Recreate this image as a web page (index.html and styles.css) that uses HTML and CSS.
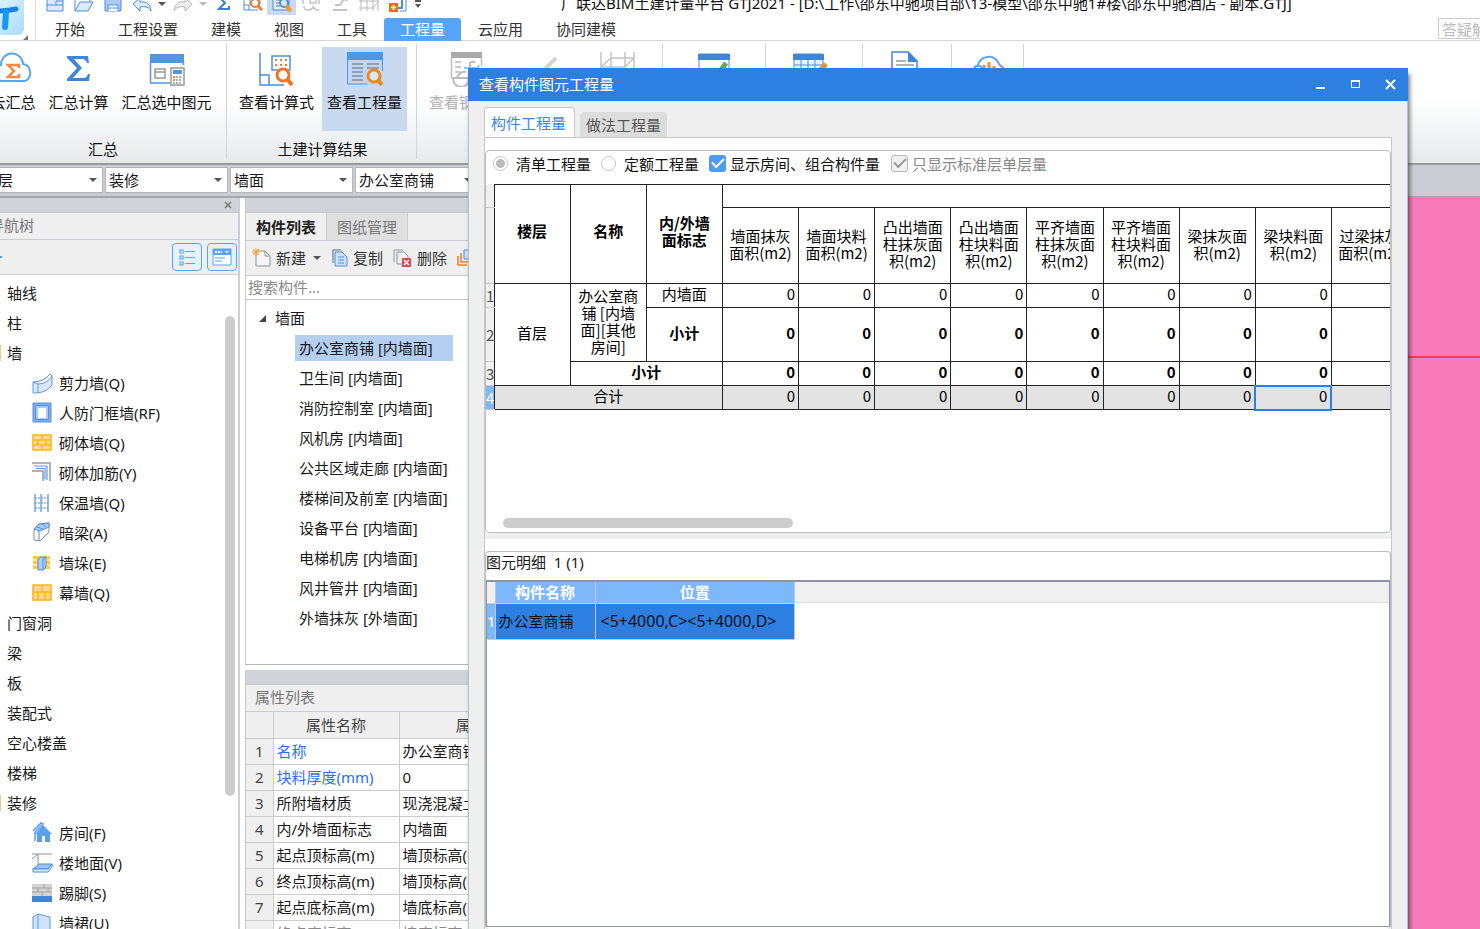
FILE: index.html
```html
<!DOCTYPE html>
<html lang="zh-CN">
<head>
<meta charset="utf-8">
<title>广联达BIM土建计量平台 GTJ2021</title>
<link rel="stylesheet" href="styles.css">
</head>
<body>
<div class="app">
  <header class="top">
    <div class="logo">
      <svg width="35" height="41" viewBox="0 0 35 41">
        <defs><linearGradient id="lg" x1="0" y1="0" x2="1" y2="1"><stop offset="0" stop-color="#eef9ff"/><stop offset="1" stop-color="#a8ddfb"/></linearGradient></defs>
        <rect x="-14" y="-10" width="38" height="45" rx="6" fill="url(#lg)"/>
        <path d="M-4 11Q8 11 16 9" stroke="#1a7fe8" stroke-width="5" stroke-linecap="round" fill="none"/>
        <path d="M6 12L5 27" stroke="#139af5" stroke-width="6" stroke-linecap="round" fill="none"/>
        <path d="M28 35v5h-5z" fill="#777"/>
      </svg>
    </div>
    <div class="top-main">
      <div class="titlebar">
        <button class="q"><svg width="18" height="16" viewBox="0 0 18 16"><path d="M1 1h16v14H1z" fill="#dcebfc" stroke="#4a8fdc"/><path d="M1 9h16M10 9v-4h7" fill="none" stroke="#4a8fdc"/></svg></button>
        <button class="q"><svg width="20" height="16" viewBox="0 0 20 16"><path d="M1 15V1h6l2 2h7v3" fill="none" stroke="#4a8fdc"/><path d="M1 15L6 6h13l-5 9z" fill="#dcebfc" stroke="#4a8fdc"/></svg></button>
        <button class="q"><svg width="18" height="16" viewBox="0 0 18 16"><path d="M1 1h16v14H1z" fill="#a9cbf5" stroke="#4a8fdc"/><path d="M4 15V9h10v6M4 12h10" fill="#fff" stroke="#4a8fdc"/></svg></button>
        <button class="q"><svg width="22" height="16" viewBox="0 0 22 16"><path d="M2 8L9 2v4c7-1 10 2 11 9-2-4-6-5-11-4v4z" fill="#dcebfc" stroke="#4a8fdc"/></svg></button>
        <button class="q q-caret"><i class="caret"></i></button>
        <button class="q"><svg width="22" height="16" viewBox="0 0 22 16"><path d="M20 8l-7-6v4C6 5 3 8 2 15c2-4 6-5 11-4v4z" fill="#eee" stroke="#b5b5b5"/></svg></button>
        <button class="q q-caret"><i class="caret pale"></i></button>
        <button class="q"><svg width="14" height="16" viewBox="0 0 14 16"><path d="M12 4V1H2l6 6-6 6h10v-3" fill="none" stroke="#3f7fcf" stroke-width="2"/></svg></button>
        <button class="q"><svg width="20" height="16" viewBox="0 0 20 16"><path d="M1 0v14h14M1 9h5v5M7 1h10v8H7z" fill="none" stroke="#4a8fdc"/><circle cx="12" cy="7" r="4" fill="#fff" stroke="#ee7d33" stroke-width="2"/><path d="M15 10l4 4" stroke="#ee7d33" stroke-width="3"/></svg></button>
        <button class="q on"><svg width="20" height="16" viewBox="0 0 20 16"><path d="M1 0v14h16V0z" fill="#dce9fa" stroke="#4a8fdc"/><path d="M4 4h4M4 7h4M4 10h4" stroke="#777"/><circle cx="12" cy="7" r="4" fill="#dce9fa" stroke="#4a8fdc" stroke-width="2"/><path d="M14 10l5 5" stroke="#f09a28" stroke-width="4"/></svg></button>
        <button class="q"><svg width="18" height="16" viewBox="0 0 18 16"><path d="M1 8V1h16v7M2 10q0 4 4 4t5-3q2 3 6 3M8 3h6v4H8z" fill="none" stroke="#c4c4c4" stroke-width="1.500"/></svg></button>
        <button class="q"><svg width="16" height="16" viewBox="0 0 16 16"><path d="M1 14h14M3 9h5l4-6 3 2" fill="none" stroke="#c4c4c4" stroke-width="2"/></svg></button>
        <button class="q"><svg width="22" height="16" viewBox="0 0 22 16"><path d="M1 5h20M1 12h15M3 0v15M9 3v12M15 3v12M20 0v15M3 5l6-5M15 12l5-6" fill="none" stroke="#bbb"/></svg></button>
        <button class="q"><svg width="20" height="16" viewBox="0 0 20 16"><path d="M12 15h6V1" fill="none" stroke="#4a8fdc"/><path d="M10 12h4V1" fill="none" stroke="#4a8fdc" stroke-width="2"/><path d="M1 7h9v9H1z" fill="#ee6c1f"/><path d="M5.500 9v5M3 11.500h5" stroke="#fff" stroke-width="1.500"/></svg></button>
        <button class="q q-caret"><svg width="8" height="10" viewBox="0 0 8 10"><path d="M1 2h6" stroke="#555" stroke-width="2"/><path d="M1 5h6l-3 4z" fill="#555"/></svg></button>
        <h1 class="title">广联达BIM土建计量平台 GTJ2021 - [D:\工作\邵东中驰项目部\13-模型\邵东中驰1#楼\邵东中驰酒店 - 副本.GTJ]</h1>
      </div>
      <nav class="menu">
        <button>开始</button><button>工程设置</button><button>建模</button><button>视图</button><button>工具</button><button class="active">工程量</button><button>云应用</button><button>协同建模</button>
        <input class="ask" type="text" aria-label="答疑解惑" placeholder="答疑解惑">
      </nav>
    </div>
  </header>

  <section class="ribbon">
    <div class="group g-sum">
      <div class="tools">
        <button><svg width="40" height="36" viewBox="0 0 40 36"><path d="M9 30a8 8 0 0 1-1-16 11 11 0 0 1 22-1 9 9 0 0 1 2 17z" fill="#fff" stroke="#5ba3f3" stroke-width="2"/><path d="M26 17v-3H15l6 6-6 6h11v-3" fill="none" stroke="#f08a45" stroke-width="2.500"/></svg>云汇总</button>
        <button><svg width="36" height="36" viewBox="0 0 36 36"><path d="M7 5h21l1 7h-2q-1-4-5-4h-8l8 9-9 10h10q4 0 5-4h2l-1 7H7v-2l10-11L7 7z" fill="#3f86d8"/></svg>汇总计算</button>
        <button><svg width="36" height="36" viewBox="0 0 36 36"><path d="M1 3h34v9H1z" fill="#4f96e3"/><path d="M1.500 11v21h20M34.500 11v3" fill="none" stroke="#4f96e3" stroke-width="1.500"/><path d="M6 18h10v9H6zM6 21h10" fill="none" stroke="#999" stroke-width="1.500"/><path d="M22 17h13v17H22z" fill="#fff" stroke="#999" stroke-width="1.500"/><path d="M24 19h9v4h-9z" fill="#4f96e3"/><path d="M24 26h9M24 29h9M24 32h9" stroke="#999" stroke-width="1.500" stroke-dasharray="2 1"/><path d="M24 26h2M24 29h2" stroke="#ee7d33" stroke-width="2"/></svg>汇总选中图元</button>
      </div>
      <div class="caption">汇总</div>
    </div>
    <div class="group g-civil">
      <div class="tools">
        <button><svg width="36" height="36" viewBox="0 0 36 36"><path d="M2 2v32h24M2 24h9v10M14 5h18v14H14z" fill="none" stroke="#4a8fdc" stroke-width="1.500"/><path d="M17 9h13M17 14h13" stroke="#ee7d33" stroke-width="2" stroke-dasharray="2 3"/><circle cx="25" cy="24" r="6" fill="#fff" stroke="#ee7322" stroke-width="3"/><path d="M29 28l5 6" stroke="#ee7322" stroke-width="4"/></svg>查看计算式</button>
        <button class="on"><svg width="38" height="36" viewBox="0 0 38 36"><path d="M1 1h36v33H1z" fill="#bfd7f4"/><path d="M1 1h36v8H1z" fill="#4f96e3"/><path d="M1.500 8v25h20M36.500 8v12" fill="none" stroke="#4f96e3"/><path d="M6 13h11M6 17h11M6 21h11M6 25h11M6 29h11M21 13h12M21 17h12" stroke="#858f9c" stroke-width="1.500"/><circle cx="28" cy="25" r="6" fill="#dce7f5" stroke="#ee8a1c" stroke-width="3"/><path d="M32 29l4 5" stroke="#ee8a1c" stroke-width="4"/></svg>查看工程量</button>
      </div>
      <div class="caption">土建计算结果</div>
    </div>
    <div class="group g-rebar">
      <div class="tools">
        <button class="off"><svg width="34" height="36" viewBox="0 0 34 36"><path d="M1 1h31v6H1z" fill="#aaa"/><path d="M1.500 7v20M31.500 7v8M5 11h6M5 16h6M5 21h5" fill="none" stroke="#bbb" stroke-width="1.500"/><path d="M14 17h12q4 0 2-3M20 19v-7q3-3 5 0M3 27q1 9 8 9t8-9zM7 26q4-6 9-5" fill="none" stroke="#bbb" stroke-width="2"/></svg>查看钢筋量</button>
        <button class="off edit" aria-label="编辑"><svg width="34" height="36" viewBox="0 0 34 36"><path d="M8 20L20 8" stroke="#d4d4d4" stroke-width="4" stroke-linecap="round"/></svg></button>
        <button class="off" aria-label="三维"><svg width="36" height="36" viewBox="0 0 36 36"><path d="M1 1v30M34 1v30M11 1v30M25 1v30M1 16h24l9-9H11zM1 16l10-9" fill="none" stroke="#c4c4c4" stroke-width="1.500"/></svg></button>
      </div>
    </div>
    <div class="group g-check"><div class="tools"><button aria-label="检查"><svg width="32" height="36" viewBox="0 0 32 36"><path d="M1 3h30v24H1z" fill="#fff" stroke="#4a8fdc"/><path d="M0 3h32v6H0z" fill="#3f86d8"/><path d="M14 24l4 2 10-14" fill="none" stroke="#6aa84f" stroke-width="5"/></svg></button></div></div>
    <div class="group g-table"><div class="tools"><button aria-label="表格"><svg width="36" height="36" viewBox="0 0 36 36"><path d="M2 3h29v24H2z" fill="#e8f2fd" stroke="#4a8fdc"/><path d="M1 3h31v6H1z" fill="#3f86d8"/><path d="M2 14h29M2 20h29M9 9v18M16 9v18M23 9v18" stroke="#4a8fdc"/><path d="M21 27l13-14" stroke="#f0922b" stroke-width="5"/></svg></button></div></div>
    <div class="group g-report"><div class="tools"><button aria-label="报表"><svg width="28" height="36" viewBox="0 0 28 36"><path d="M1 1h16l9 9v23H1z" fill="#fff" stroke="#3f86d8" stroke-width="1.500"/><path d="M17 0l10 11H17z" fill="#3f86d8"/><path d="M5 10h10M5 14h18" stroke="#999" stroke-width="1.500"/></svg></button></div></div>
    <div class="group g-cloud"><div class="tools"><button aria-label="云指标"><svg width="40" height="36" viewBox="0 0 40 36"><path d="M9 28a8 8 0 0 1-1-13h4M10 14a11 11 0 0 1 20-3q1 3 3 4a8 8 0 0 1 1 13z" fill="none" stroke="#5ba3f3" stroke-width="2"/><path d="M16 14v12M21 11v15M26 15v11" stroke="#f08a45" stroke-width="3"/></svg></button></div></div>
  </section>

  <section class="filters">
    <label class="combo first"><select aria-label="楼层"><option>首层</option></select><i class="caret"></i></label>
    <label class="combo"><select aria-label="构件大类"><option>装修</option></select><i class="caret"></i></label>
    <label class="combo"><select aria-label="构件类型"><option>墙面</option></select><i class="caret"></i></label>
    <label class="combo"><select aria-label="构件"><option>办公室商铺</option></select><i class="caret"></i></label>
  </section>

  <main class="work">
    <aside class="nav">
      <div class="strip"><button class="close" aria-label="关闭"><svg width="8" height="8" viewBox="0 0 8 8"><path d="M1 1l6 6M7 1L1 7" stroke="#777" stroke-width="1.500"/></svg></button></div>
      <div class="panel-title">导航树</div>
      <div class="nav-tools">
        <i class="dash"></i>
        <button aria-label="列表"><svg width="18" height="18" viewBox="0 0 18 18"><path d="M2 2h3v3H2zM2 8h3v3H2zM2 14h3v3H2zM7 3.500h10M7 9.500h10M7 15.500h10" fill="none" stroke="#5ba3f3" stroke-width="1.200"/></svg></button>
        <button aria-label="面板"><svg width="20" height="18" viewBox="0 0 20 18"><path d="M1 1h18v16H1z" fill="#fff" stroke="#5ba3f3"/><path d="M1 1h18v6H1z" fill="#5ba3f3"/><path d="M3 4h7" stroke="#fff" stroke-width="2" stroke-dasharray="2 1"/><path d="M13 3h4l-2 2z" fill="#fff"/><path d="M3 10h10M3 13h7" stroke="#5ba3f3"/></svg></button>
      </div>
      <div class="nav-body">
        <ul class="tree">
          <li>轴线</li><li>柱</li><li class="open">墙</li>
          <li class="sub"><svg width="22" height="22" viewBox="0 0 22 22"><path d="M1 10q11 0 17-8l2 2v9q-5 7-15 8H1z" fill="#dbe9fb" stroke="#5a9ae6"/><path d="M1 10q11 0 17-8l2 2q-5 8-14 8z" fill="#fff" stroke="#5a9ae6"/><path d="M6 12v9" stroke="#5a9ae6"/></svg>剪力墙(Q)</li>
          <li class="sub"><svg width="22" height="22" viewBox="0 0 22 22"><path d="M1 1h18v19H1z" fill="#7fb1f0" stroke="#5a8fd8"/><path d="M3.500 3.500h13v14h-13z" fill="#a7cbf7" stroke="#5a8fd8"/><path d="M6 6h8v10H6z" fill="#fff"/></svg>人防门框墙(RF)</li>
          <li class="sub"><svg width="22" height="22" viewBox="0 0 22 22"><path d="M1 3h18v15H1z" fill="#ffdc94" stroke="#fdb515" stroke-width="1.500"/><path d="M1 8h18M1 13h18M10 3v5M6 8v5M14 8v5M10 13v5" stroke="#fdb515" stroke-width="1.500"/></svg>砌体墙(Q)</li>
          <li class="sub"><svg width="22" height="22" viewBox="0 0 22 22"><path d="M0 1h18v18M0 9h11v10" fill="none" stroke="#929ba3" stroke-width="1.500"/><path d="M2 4h13v14M4 6.500h9v11" fill="none" stroke="#5a9ae6" stroke-width="1.200"/></svg>砌体加筋(Y)</li>
          <li class="sub"><svg width="22" height="22" viewBox="0 0 22 22"><path d="M3 2v18M9 2v18M16 2v18" stroke="#4a8fdc" stroke-width="1.200"/><path d="M3 6h13M3 11h13M3 16h13" stroke="#4a8fdc" stroke-dasharray="2 1"/></svg>保温墙(Q)</li>
          <li class="sub"><svg width="22" height="22" viewBox="0 0 22 22"><path d="M2 7l5-5 10-1v9l-9 9-6-1z" fill="#fff" stroke="#888"/><path d="M2 7l5-5 10-1v4L8 9l-6-2" fill="#a9cdf8" stroke="#4a8fdc"/><path d="M7 9v10M5 5l6 2M10 2l4 3" stroke="#4a8fdc"/></svg>暗梁(A)</li>
          <li class="sub"><svg width="22" height="22" viewBox="0 0 22 22"><path d="M1 4h17v13H1z" fill="#ffc848"/><path d="M1 8h17M1 13h17" stroke="#fff"/><path d="M6 7l3-2h5v10l-3 3H6z" fill="#a9cdf8" stroke="#4a8fdc"/><path d="M11 7v11M11 7l3-2" stroke="#4a8fdc"/></svg>墙垛(E)</li>
          <li class="sub"><svg width="22" height="22" viewBox="0 0 22 22"><path d="M1 3h18v15H1z" fill="#ffd884" stroke="#fdb515" stroke-width="1.500"/><path d="M1 10h18M10 3v7M6 10v8M13 10v8" stroke="#fdb515" stroke-width="1.500"/></svg>幕墙(Q)</li>
          <li>门窗洞</li><li>梁</li><li>板</li><li>装配式</li><li>空心楼盖</li><li>楼梯</li><li class="open">装修</li>
          <li class="sub"><svg width="22" height="22" viewBox="0 0 22 22"><path d="M1 9l8-8 2 1-8 8v9" fill="none" stroke="#5a9ae6" stroke-width="1.500"/><path d="M3 12l8-9 9 9h-2v8h-5v-6h-3v6H5v-8z" fill="#5a9fea"/></svg>房间(F)</li>
          <li class="sub"><svg width="22" height="22" viewBox="0 0 22 22"><path d="M0 2h20M6 2v12M0 7l6-5" fill="none" stroke="#8a949d"/><path d="M1 17l6-5h13l-4 5z" fill="#9cc5f6" stroke="#4a8fdc"/><path d="M1 17v3h15l4-5v-3l-4 5z" fill="#dbe9fb" stroke="#4a8fdc"/></svg>楼地面(V)</li>
          <li class="sub"><svg width="22" height="22" viewBox="0 0 22 22"><path d="M0 2h20v12H0z" fill="#d4d4d4"/><path d="M0 6h20M0 10h20M12 2v4M6 6v4M16 6v4M10 10v4" stroke="#a0a0a0"/><path d="M0 14h20v6H0z" fill="#3f86d8"/></svg>踢脚(S)</li>
          <li class="sub"><svg width="22" height="22" viewBox="0 0 22 22"><path d="M1 5l5-3 12 3v16H1z" fill="#cfe2fb" stroke="#5a9ae6"/><path d="M6 2v16l12 3" fill="none" stroke="#5a9ae6"/></svg>墙裙(U)</li>
        </ul>
        <div class="vbar"></div>
      </div>
    </aside>

    <div class="side">
      <section class="comp">
        <div class="strip"></div>
        <div class="comp-tabs"><button class="active">构件列表</button><button>图纸管理</button></div>
        <div class="comp-tools">
          <button><svg width="20" height="20" viewBox="0 0 20 20"><path d="M4 3h9l5 5v10H4z" fill="#f4f4f4" stroke="#8d979f"/><path d="M13 3v5h5" fill="none" stroke="#8d979f"/><path d="M1 1l6 6M7 1L1 7M4 0v8M0 4h8" stroke="#f59a23"/></svg>新建<i class="caret"></i></button>
          <button><svg width="18" height="20" viewBox="0 0 18 20"><path d="M2 15V2h8" fill="none" stroke="#8d979f" stroke-width="1.500"/><path d="M4 4h7l5 5v9H4z" fill="#cfe2fb" stroke="#4a8fdc"/><path d="M7 9h6M7 12h6M7 15h6" stroke="#4a8fdc"/></svg>复制</button>
          <button><svg width="20" height="20" viewBox="0 0 20 20"><path d="M1 14V2h9M4 16V4h7l4 4v3M4 16h5" fill="none" stroke="#8d979f"/><path d="M9 10h9v9H9z" fill="#d9484e"/><path d="M11 12l5 5M16 12l-5 5" stroke="#fff" stroke-width="1.500"/></svg>删除</button>
          <button aria-label="层间复制"><svg width="18" height="20" viewBox="0 0 18 20"><path d="M1 8v9h9M4 5v9h9" fill="none" stroke="#ee7d33" stroke-width="1.500"/><path d="M7 2h10v9H7z" fill="#cfe2fb" stroke="#4a8fdc"/></svg></button>
        </div>
        <input class="search" type="text" aria-label="搜索构件" placeholder="搜索构件...">
        <ul class="comp-list">
          <li class="root"><svg width="9" height="9" viewBox="0 0 9 9"><path d="M8 1v7H1z" fill="#444"/></svg>墙面</li>
          <li><span class="sel">办公室商铺 [内墙面]</span></li>
          <li><span>卫生间 [内墙面]</span></li>
          <li><span>消防控制室 [内墙面]</span></li>
          <li><span>风机房 [内墙面]</span></li>
          <li><span>公共区域走廊 [内墙面]</span></li>
          <li><span>楼梯间及前室 [内墙面]</span></li>
          <li><span>设备平台 [内墙面]</span></li>
          <li><span>电梯机房 [内墙面]</span></li>
          <li><span>风井管井 [内墙面]</span></li>
          <li><span>外墙抹灰 [外墙面]</span></li>
        </ul>
      </section>
      <section class="props">
        <div class="strip"></div>
        <div class="panel-title">属性列表</div>
        <table class="prop-table">
          <colgroup><col class="c-no"><col class="c-name"><col></colgroup>
          <thead><tr><th></th><th>属性名称</th><th class="val">属性值</th></tr></thead>
          <tbody>
            <tr><th>1</th><td class="link">名称</td><td>办公室商铺</td></tr>
            <tr><th>2</th><td class="link">块料厚度(mm)</td><td>0</td></tr>
            <tr><th>3</th><td>所附墙材质</td><td>现浇混凝土</td></tr>
            <tr><th>4</th><td>内/外墙面标志</td><td>内墙面</td></tr>
            <tr><th>5</th><td>起点顶标高(m)</td><td>墙顶标高(m)</td></tr>
            <tr><th>6</th><td>终点顶标高(m)</td><td>墙顶标高(m)</td></tr>
            <tr><th>7</th><td>起点底标高(m)</td><td>墙底标高(m)</td></tr>
            <tr class="faint"><th>8</th><td>终点底标高(m)</td><td>墙底标高(m)</td></tr>
          </tbody>
        </table>
      </section>
    </div>
    <div class="canvas"><div class="axis"></div></div>
  </main>
</div>

<div class="dialog" role="dialog" aria-labelledby="dlg-title">
  <div class="dlg-bar">
    <h2 id="dlg-title">查看构件图元工程量</h2>
    <button aria-label="最小化"><svg width="11" height="11" viewBox="0 0 11 11"><path d="M1 9h9" stroke="#fff" stroke-width="2"/></svg></button>
    <button aria-label="最大化"><svg width="11" height="11" viewBox="0 0 11 11"><path d="M1.500 2.500h8v6h-8z" fill="none" stroke="#fff"/><path d="M1 2h9" stroke="#fff" stroke-width="2"/></svg></button>
    <button aria-label="关闭"><svg width="11" height="11" viewBox="0 0 11 11"><path d="M1 1l9 9M10 1L1 10" stroke="#fff" stroke-width="2"/></svg></button>
  </div>
  <div class="dlg-body">
    <div class="dlg-tabs"><button class="active">构件工程量</button><button>做法工程量</button></div>
    <div class="page">
      <section class="box qty">
        <div class="opts">
          <label><input type="radio" name="k" checked disabled><span>清单工程量</span></label>
          <label><input type="radio" name="k" disabled><span>定额工程量</span></label>
          <label class="ck"><input type="checkbox" checked><span>显示房间、组合构件量</span></label>
          <label class="ck dim"><input type="checkbox" checked disabled><span>只显示标准层单层量</span></label>
        </div>
        <div class="sheet-wrap">
          <table class="sheet">
            <colgroup><col class="c-row"><col><col><col><col><col><col><col><col><col><col><col><col></colgroup>
            <tr class="h1"><th class="no"></th><th rowspan="2">楼层</th><th rowspan="2">名称</th><th rowspan="2">内/外墙<br>面标志</th><td colspan="9"></td></tr>
            <tr class="h2"><th class="no"></th><td>墙面抹灰<br>面积(m2)</td><td>墙面块料<br>面积(m2)</td><td>凸出墙面<br>柱抹灰面<br>积(m2)</td><td>凸出墙面<br>柱块料面<br>积(m2)</td><td>平齐墙面<br>柱抹灰面<br>积(m2)</td><td>平齐墙面<br>柱块料面<br>积(m2)</td><td>梁抹灰面<br>积(m2)</td><td>梁块料面<br>积(m2)</td><td>过梁抹灰<br>面积(m2)</td></tr>
            <tr class="r"><th class="no">1</th><td rowspan="3">首层</td><td rowspan="2">办公室商<br>铺 [内墙<br>面][其他<br>房间]</td><td>内墙面</td><td class="n">0</td><td class="n">0</td><td class="n">0</td><td class="n">0</td><td class="n">0</td><td class="n">0</td><td class="n">0</td><td class="n">0</td><td></td></tr>
            <tr class="r tall b"><th class="no">2</th><td>小计</td><td class="n">0</td><td class="n">0</td><td class="n">0</td><td class="n">0</td><td class="n">0</td><td class="n">0</td><td class="n">0</td><td class="n">0</td><td></td></tr>
            <tr class="r b"><th class="no">3</th><td colspan="2">小计</td><td class="n">0</td><td class="n">0</td><td class="n">0</td><td class="n">0</td><td class="n">0</td><td class="n">0</td><td class="n">0</td><td class="n">0</td><td></td></tr>
            <tr class="r total"><th class="no cur">4</th><td colspan="3">合计</td><td class="n">0</td><td class="n">0</td><td class="n">0</td><td class="n">0</td><td class="n">0</td><td class="n">0</td><td class="n">0</td><td class="n focus">0</td><td></td></tr>
          </table>
        </div>
        <div class="hbar"></div>
      </section>
      <div class="splitter"></div>
      <section class="box detail">
        <div class="detail-title">图元明细&nbsp; 1 (1)</div>
        <div class="detail-frame">
          <div class="detail-head">
            <table class="detail-table">
              <colgroup><col class="d-no"><col class="d-name"><col class="d-pos"></colgroup>
              <thead><tr><th class="no"></th><th>构件名称</th><th>位置</th></tr></thead>
              <tbody><tr><th class="no cur">1</th><td>办公室商铺</td><td class="pos">&lt;5+4000,C&gt;&lt;5+4000,D&gt;</td></tr></tbody>
            </table>
          </div>
        </div>
      </section>
    </div>
  </div>
</div>
</body>
</html>
```

FILE: styles.css
```css
* { box-sizing: border-box; }
html, body { height: 100%; }
body {
  margin: 0;
  overflow: hidden;
  background: #fff;
  color: #1a1a1a;
  font: 15px/20px "Noto Sans", "Noto Sans CJK SC", sans-serif;
}
button {
  margin: 0;
  padding: 0;
  border: 0;
  background: none;
  color: inherit;
  font: inherit;
  white-space: nowrap;
}
input, select { font: inherit; color: inherit; }
ul { margin: 0; padding: 0; list-style: none; }
h1, h2 { margin: 0; font: inherit; }
svg { display: block; flex: none; }
table { border-collapse: collapse; table-layout: fixed; }

.caret {
  display: inline-block;
  border: 4px solid transparent;
  border-top-color: #555;
  border-bottom: 0;
}
.caret.pale { border-top-color: #bbb; }

.app { display: flex; flex-direction: column; height: 100vh; overflow: hidden; }

/* title and menu */
.top { display: flex; flex: none; height: 41px; border-bottom: 1px solid #d5d7d9; }
.logo { flex: none; width: 36px; border-right: 1px solid #ddd; }
.top-main { flex: 1; min-width: 0; }
.titlebar { display: flex; align-items: center; height: 28px; margin-top: -10px; padding-left: 4px; overflow: hidden; }
.q { display: flex; flex: none; align-items: center; justify-content: center; width: 29px; height: 22px; }
.q-caret { width: 12px; }
.q.on { background: #c9d9f0; }
.title { margin-left: 137px; padding-bottom: 2px; white-space: nowrap; color: #111; }
.menu { display: flex; gap: 1px; height: 23px; padding-left: 3px; color: #333; }
.menu button { padding: 0 16px 2px; border-radius: 3px 3px 0 0; }
.menu .active { background: #57a3f5; color: #fff; }
.ask { width: 80px; height: 21px; margin: 0 -38px 0 auto; padding: 0 3px; border: 1px solid #ccc; background: #fff; }
.search::placeholder { color: #8a8a8a; opacity: 1; }
.ask::placeholder { color: #bbb; opacity: 1; }

/* ribbon */
.ribbon { display: flex; flex: none; height: 122px; background: linear-gradient(#fff 45%, #e6eaeb); color: #111; }
.group {
  display: flex;
  flex: none;
  flex-direction: column;
  justify-content: space-between;
  margin: 3px 0 4px;
  padding: 3px 0 0;
  border-right: 1px solid #d3d6d8;
}
.tools { display: flex; gap: 3px; justify-content: center; }
.tools button { display: flex; flex-direction: column; align-items: center; gap: 5px; height: 84px; padding: 4px 5px; }
.tools .on { background: #c9d9f0; }
.tools .off { color: #b0b0b0; }
.tools .edit { width: 80px; }
.caption { text-align: center; }
.g-sum { width: 247px; margin-left: -20px; }
.g-sum .tools { padding-right: 4px; }
.g-civil { width: 190px; padding-left: 6px; padding-right: 8px; }
.g-civil .caption { padding-left: 4px; }
.g-rebar { width: 246px; padding-left: 7px; }
.g-rebar .tools { justify-content: flex-start; }
.g-check { width: 103px; }
.g-table { width: 97px; padding-right: 8px; }
.g-report { width: 89px; padding-right: 5px; }
.g-cloud { width: 72px; }

/* filter bar */
.filters {
  display: flex;
  flex: none;
  gap: 2px;
  height: 35px;
  padding: 2px 0 3px;
  background: #c9cdd1;
  border-top: 2px solid #95999d;
  border-bottom: 2px solid #a2a8ac;
}
.combo { display: flex; flex: none; align-items: center; width: 123px; background: #fff; border: 1px solid #b4b8bb; }
.combo.first { width: 124px; margin-left: -21px; }
.combo select { flex: 1; min-width: 0; padding: 0 3px; border: 0; background: none; appearance: none; }
.combo .caret { margin-right: 5px; }

/* work area */
.work { display: flex; flex: 1; min-height: 0; }
.nav { display: flex; flex: none; flex-direction: column; width: 260px; margin-left: -20px; border-right: 2px solid #ccd0d4; }
.strip { display: flex; flex: none; align-items: center; justify-content: flex-end; height: 15px; background: #d1d3d9; border-bottom: 1px solid #c8cacf; }
.close { margin-right: 6px; }
.panel-title { flex: none; height: 27px; padding: 2px 9px; background: #efefef; border-bottom: 1px solid #c9ccd0; color: #777; }
.nav-tools { display: flex; flex: none; align-items: center; gap: 5px; height: 35px; padding-right: 1px; background: #efefef; border-bottom: 1px solid #c9ccd0; }
.nav-tools button { display: grid; place-items: center; width: 30px; height: 28px; border: 1px solid #5ba3f3; border-radius: 4px; background: #e6f1fd; }
.dash { width: 22px; height: 2px; margin-right: auto; background: #4a9af0; }
.nav-body { display: flex; flex: 1; min-height: 0; overflow: hidden; }
.tree { flex: 1; padding: 3px 0 0 20px; }
.tree li { display: flex; align-items: center; gap: 5px; height: 30px; padding-left: 7px; }
.tree .sub { padding-left: 32px; }
.tree .open { padding-left: 6px; border-left: 1px solid #f5c98a; border-image: linear-gradient(transparent 25%, #f5c98a 25%, #f5c98a 75%, transparent 75%) 1; }
.vbar { flex: none; width: 10px; height: 480px; margin: 41px 3px 0 0; border-radius: 5px; background: #ccc; }

.side { display: flex; flex: none; flex-direction: column; gap: 5px; width: 360px; margin-left: 5px; }
.comp, .props { border-left: 1px solid #c4c7cb; }
.comp { flex: none; height: 467px; border-bottom: 1px solid #b5b8bb; }
.comp-tabs { display: flex; height: 28px; background: #efefef; border-bottom: 1px solid #c9ccd0; }
.comp-tabs button { padding: 0 10px; border-right: 1px solid #c9ccd0; background: #dfdfdf; color: #777; }
.comp-tabs .active { background: #efefef; color: #222; font-weight: bold; }
.comp-tools { display: flex; align-items: center; gap: 10px; height: 35px; padding-left: 6px; background: #efefef; border-bottom: 1px solid #c9ccd0; color: #333; }
.comp-tools button { display: flex; align-items: center; gap: 4px; }
.comp-tools .caret { margin-left: 3px; }
.search { display: block; width: 100%; height: 24px; padding: 0 2px 1px; border: 0; border-bottom: 1px solid #c4c7cb; }
.comp-list { padding-top: 3px; }
.comp-list li { display: flex; align-items: center; height: 30px; padding-left: 49px; }
.comp-list .root { gap: 8px; padding-left: 12px; }
.comp-list span { padding: 3px 20px 3px 4px; }
.comp-list .sel { background: #b4cff0; }

.props { flex: 1; min-height: 0; overflow: hidden; }
.prop-table { width: 100%; }
.c-no { width: 27px; }
.c-name { width: 126px; }
.prop-table th, .prop-table td { height: 26px; padding: 0 3px; border: 1px solid #ccc; white-space: nowrap; overflow: hidden; text-align: left; font-weight: normal; }
.prop-table tr > :first-child { border-left: 0; }
.prop-table thead th { border-top: 0; }
.prop-table th { background: #efefef; color: #444; text-align: center; }
.prop-table .val { padding-right: 50px; }
.prop-table .link { color: #2a6ff0; }
.prop-table .faint { color: #888; }

.canvas { flex: 1; background: #f87bb9; }
.axis { height: 2px; margin-top: 158px; background: #fb3c5c; }

/* dialog */
.dialog {
  position: absolute;
  top: 68px;
  right: 72px;
  bottom: 0;
  left: 468px;
  display: flex;
  flex-direction: column;
  background: #efefef;
  box-shadow: 2px 6px 4px rgba(0, 0, 0, .5);
}
.dlg-bar { display: flex; flex: none; align-items: center; gap: 24px; height: 33px; padding: 0 12px 0 11px; background: #2d80e2; color: #fff; }
.dlg-bar h2 { margin-right: auto; padding-bottom: 2px; }
.dlg-body { display: flex; flex: 1; flex-direction: column; min-height: 0; padding: 0 15px; border: solid #b9c0d0; border-width: 0 1px; }
.dlg-tabs { display: flex; flex: none; align-items: flex-end; gap: 5px; height: 36px; }
.dlg-tabs button { height: 25px; padding: 0 6px; border-radius: 4px 4px 0 0; background: #ddd; color: #555; }
.dlg-tabs .active { height: 31px; padding: 0 8px 0 6px; margin-bottom: -1px; border: 1px solid #c5c8cb; border-bottom: 0; background: #fff; color: #3b87e4; }
.page { display: flex; flex: 1; flex-direction: column; min-height: 0; padding-top: 12px; border: solid #c5c8cb; border-width: 1px 1px 0; background: #fff; }
.box { display: flex; flex-direction: column; border: 1px solid #babec2; border-radius: 4px; }
.qty { flex: none; height: 383px; }
.opts { display: flex; flex: none; align-items: center; height: 33px; padding: 0 7px 8px; color: #111; }
.opts label { display: flex; align-items: center; gap: 8px; margin-right: 10px; }
.opts .ck { gap: 4px; margin-right: 11px; }
.opts .dim { color: #888; }
.opts input { flex: none; width: 15px; height: 15px; margin: 0; appearance: none; border: 1px solid #c4c4c4; border-radius: 50%; background: #fff; }
.opts input[type=radio]:checked { background: radial-gradient(#bbb 0 4px, #fff 5px); }
.opts .ck input { display: grid; place-items: center; width: 17px; height: 17px; border: 0; border-radius: 3px; background: #4b9bf5; }
.opts .ck input::before { content: ""; width: 10px; height: 5px; margin-bottom: 4px; border: solid #fff; border-width: 0 0 2px 2px; transform: rotate(-45deg); }
.opts .ck input:disabled { border: 1px solid #b5b5b5; background: #f2f2f2; }
.opts .ck input:disabled::before { border-color: #999; }

.sheet-wrap { flex: 1; min-height: 0; overflow: hidden; }
.sheet { width: calc(100% + 18px); color: #000; line-height: 17px; font-family: "Noto Sans CJK SC", sans-serif; }
.c-row { width: 8px; }
.sheet th, .sheet td { padding: 0 0 4px; border: 1px solid #222; text-align: center; white-space: nowrap; }
.sheet th { padding-bottom: 7px; }
.sheet .h1 { height: 23px; }
.sheet .h2 { height: 76px; }
.sheet .r { height: 24px; }
.sheet .tall { height: 54px; }
.sheet .b td { font-weight: bold; }
.sheet .n { padding-right: 3px; text-align: right; }
.sheet .no, .detail-table .no { padding: 0; border: solid #ccc; border-width: 0 0 1px; background: #f0f0f0; color: #555; font-weight: normal; }
.sheet .total td { background: #e3e3e3; }
.sheet .no.cur, .detail-table .no.cur { background: #7db8fa; color: #fff; }
.sheet .focus { border: 2px solid #2d80e2; }
.hbar { flex: none; width: 290px; height: 10px; margin: 0 0 4px 17px; border-radius: 5px; background: #ccc; }
.splitter { flex: none; height: 6px; margin-bottom: 12px; background: #efefef; }
.detail { flex: 1; min-height: 0; padding-bottom: 2px; border-bottom: 0; }
.detail-title { flex: none; height: 28px; }
.detail-frame { flex: 1; border: 1px solid #8f959c; border-top-width: 2px; }
.detail-head { background: linear-gradient(#f0f0f0 20px, #ddd 20px, #ddd 21px, #fff 21px); }
.detail-table { width: 308px; }
.d-no { width: 8px; }
.d-name { width: 100px; }
.detail-table th { height: 21px; padding: 0; border: 1px solid #bcc9d8; border-top: 0; background: #7db8fa; color: #fff; }
.detail-table td { height: 36px; padding: 0 3px; border: 1px solid #bcc9d8; background: #2d80e2; color: #111; white-space: nowrap; }
.detail-table .pos { padding: 0 5px; font-size: 16px; }
```
